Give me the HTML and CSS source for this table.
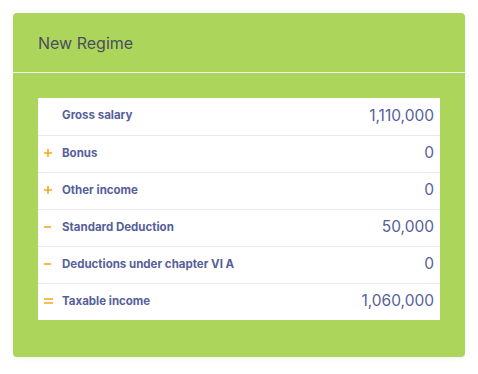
FILE: index.html
```html
<!DOCTYPE html>
<html>
<head>
<meta charset="utf-8">
<link rel="stylesheet" href="styles.css">
</head>
<body>
<div class="card">
  <div class="card-header">New Regime</div>
  <div class="card-body">
    <div class="table">
      <div class="row">
        <span class="sign"></span>
        <span class="label">Gross salary</span>
        <span class="value">1,110,000</span>
      </div>
      <div class="row">
        <span class="sign"><svg width="8" height="8" viewBox="0 0 8 8"><path d="M4 0V8M0 4H8" stroke="#f7a81b" stroke-width="1.6"/></svg></span>
        <span class="label">Bonus</span>
        <span class="value">0</span>
      </div>
      <div class="row">
        <span class="sign"><svg width="8" height="8" viewBox="0 0 8 8"><path d="M4 0V8M0 4H8" stroke="#f7a81b" stroke-width="1.6"/></svg></span>
        <span class="label">Other income</span>
        <span class="value">0</span>
      </div>
      <div class="row">
        <span class="sign"><svg width="8" height="8" viewBox="0 0 8 8"><path d="M0 4H7" stroke="#f7a81b" stroke-width="1.6"/></svg></span>
        <span class="label">Standard Deduction</span>
        <span class="value">50,000</span>
      </div>
      <div class="row">
        <span class="sign"><svg width="8" height="8" viewBox="0 0 8 8"><path d="M0 4H7" stroke="#f7a81b" stroke-width="1.6"/></svg></span>
        <span class="label">Deductions under chapter VI A</span>
        <span class="value">0</span>
      </div>
      <div class="row">
        <span class="sign"><svg width="9" height="8" viewBox="0 0 9 8"><path d="M0 2H9M0 6H9" stroke="#f7a81b" stroke-width="1.6"/></svg></span>
        <span class="label">Taxable income</span>
        <span class="value">1,060,000</span>
      </div>
    </div>
  </div>
</div>
</body>
</html>
```
FILE: styles.css
```css
html, body {
  margin: 0;
  background: #ffffff;
}
body {
  padding: 13px;
  font-family: "Inter", "Open Sans", sans-serif;
}
.card {
  width: 452px;
  background: #acd65b;
  border-radius: 4px;
  box-shadow: 0 1px 6px rgba(0, 0, 0, 0.06);
}
.card-header {
  height: 60px;
  box-sizing: border-box;
  padding-left: 25px;
  display: flex;
  align-items: center;
  font-size: 16px;
  color: #4b4d5e;
  border-bottom: 1px solid #f1f5e8;
}
.card-body {
  padding: 25px 25px 37px;
}
.table {
  background: #ffffff;
}
.row {
  height: 37px;
  box-sizing: border-box;
  display: flex;
  align-items: center;
  padding: 0 6px 3px 6px;
  border-top: 1px solid #e8e9f1;
}
.row:first-child {
  border-top: none;
}
.sign {
  width: 18px;
  display: flex;
  align-items: center;
  padding-top: 1px;
}
.label {
  flex: 1;
  font-size: 11.5px;
  font-weight: 700;
  color: #55609a;
}
.value {
  font-size: 15.5px;
  color: #55609a;
}
```
